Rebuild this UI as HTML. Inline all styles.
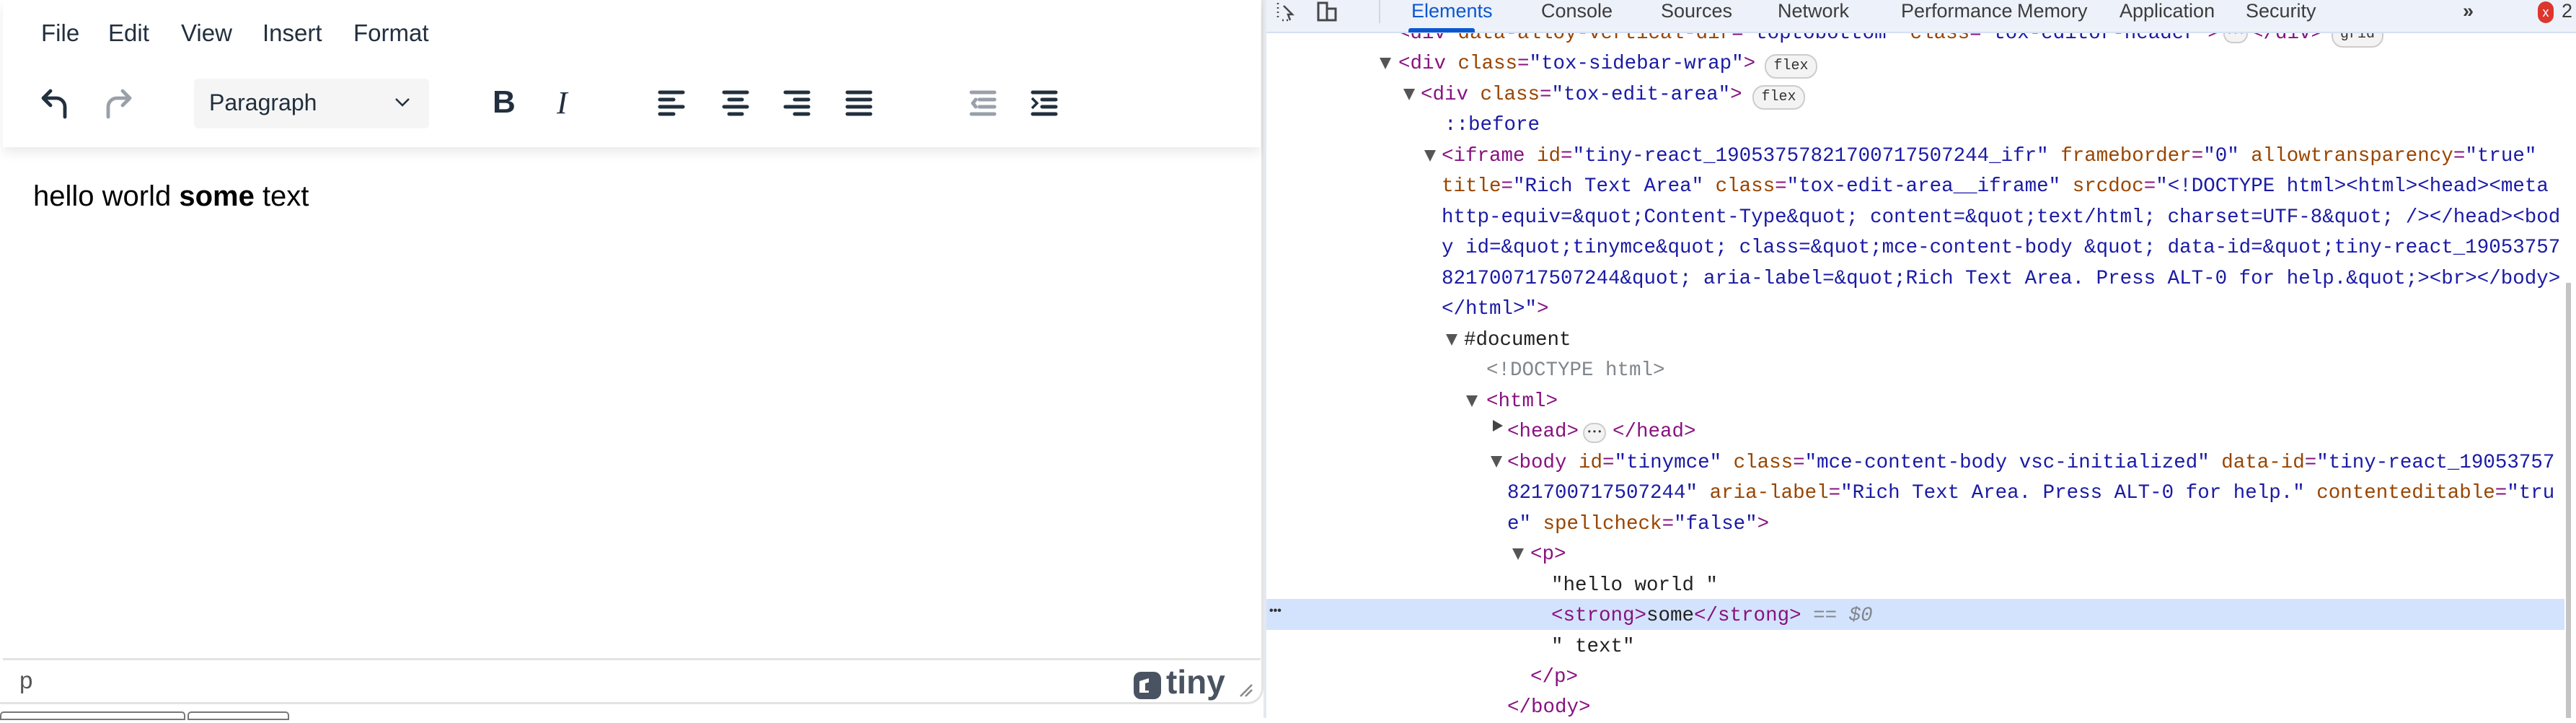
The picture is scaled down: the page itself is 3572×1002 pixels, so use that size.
<!DOCTYPE html>
<html><head><meta charset="utf-8"><style>
*{margin:0;padding:0;box-sizing:border-box}
body{width:3572px;height:995px;overflow:hidden;background:#fff;position:relative;font-family:"Liberation Sans",sans-serif}
.a{position:absolute;white-space:pre}
.m{font-family:"Liberation Mono",monospace;font-size:27.5px;line-height:42px}
.t{color:#881280}.n{color:#994500}.v{color:#1a1aa6}.k{color:#222}.g{color:#80868b}
.tri{position:absolute;width:0;height:0;border-left:8px solid transparent;border-right:8px solid transparent;border-top:16px solid #555}
.trr{position:absolute;width:0;height:0;border-top:8px solid transparent;border-bottom:8px solid transparent;border-left:14px solid #444}
.badge{position:absolute;border:2px solid #ccc;background:#f3f3f3;border-radius:16px;font-family:"Liberation Mono",monospace;font-size:20px;color:#333;text-align:center}
.menu{font-size:33px;color:#222f3e;top:27px}
.tab{position:absolute;top:0;font-size:27px;color:#3c3c3c;line-height:30px}
</style></head><body>

<!-- editor pane -->
<div class="a" style="left:0;top:0;width:1752px;height:976px;border-right:3px solid #e3e3e3;border-bottom:3px solid #e3e3e3;border-radius:0 0 22px 0"></div>
<div class="a" style="left:4px;top:0;width:1744px;height:204px;background:#fff;box-shadow:0 8px 14px rgba(0,0,0,0.08)"></div>
<div class="a menu" style="left:57px">File</div>
<div class="a menu" style="left:150px">Edit</div>
<div class="a menu" style="left:251px">View</div>
<div class="a menu" style="left:364px">Insert</div>
<div class="a menu" style="left:490px">Format</div>

<svg class="a" style="left:50px;top:118px" width="48" height="50" viewBox="0 0 24 25"><path d="M5 9 L10 4 M5 9 L10 14 M5 9 H14 a6 6 0 0 1 6 6 v7" fill="none" stroke="#222f3e" stroke-width="2.4" stroke-linecap="round" stroke-linejoin="round"/></svg>
<svg class="a" style="left:142px;top:118px" width="48" height="50" viewBox="0 0 24 25"><path d="M19 9 L14 4 M19 9 L14 14 M19 9 H10 a6 6 0 0 0 -6 6 v7" fill="none" stroke="#9aa0a8" stroke-width="2.4" stroke-linecap="round" stroke-linejoin="round"/></svg>

<div class="a" style="left:269px;top:109px;width:326px;height:69px;background:#f5f5f5;border-radius:6px"></div>
<div class="a" style="left:290px;top:124px;font-size:32px;color:#222f3e">Paragraph</div>
<svg class="a" style="left:546px;top:132px" width="24" height="20" viewBox="0 0 24 20"><path d="M3 5 L12 14 L21 5" fill="none" stroke="#222f3e" stroke-width="2.5"/></svg>

<div class="a" style="left:683px;top:117px;font-size:44px;font-weight:bold;color:#222f3e">B</div>
<div class="a" style="left:772px;top:117px;font-size:44px;font-style:italic;font-family:'Liberation Serif',serif;color:#222f3e">I</div>

<svg class="a" style="left:912px;top:124px;overflow:visible" width="600" height="40">
<g stroke="#222f3e" stroke-width="5" stroke-linecap="round">
<path d="M3 4H35M3 14H22M3 24H35M3 34H22"/>
<path d="M92 4H124M99 14H117M92 24H124M99 34H117"/>
<path d="M177 4H209M190 14H209M177 24H209M190 34H209"/>
<path d="M263 4H295M263 14H295M263 24H295M263 34H295"/>
<path d="M520 4H552M533 14H552M533 24H552M520 34H552" />
</g>
<g stroke="#9aa0a8" stroke-width="5" stroke-linecap="round"><path d="M435 4H467M446 14H467M446 24H467M435 34H467M437 19L441 14M437 19L441 24" fill="none"/></g>
<path d="M519 12L526 19L519 26" stroke="#222f3e" stroke-width="3.5" fill="none"/>
</svg>

<div class="a" style="left:46px;top:250px;font-size:40px;color:#000">hello world <b>some</b> text</div>

<div class="a" style="left:4px;top:912px;width:1744px;height:3px;background:#e3e3e3"></div>
<div class="a" style="left:27px;top:924px;font-size:33px;color:#555">p</div>
<svg class="a" style="left:1571px;top:930px" width="40" height="40" viewBox="0 0 40 40"><rect x="1" y="1" width="38" height="38" rx="10" fill="#4a5361"/><path d="M9 14 L22 10 V30 L9 30 Z" fill="#fff"/><path d="M17 17 L31 13 V27 L17 27 Z" fill="#4a5361"/><path d="M22 17 L31 14 V27 L22 27 Z" fill="#fff" opacity="0"/></svg>
<div class="a" style="left:1617px;top:918px;font-size:46px;font-weight:bold;color:#4a5361">tiny</div>
<svg class="a" style="left:1716px;top:945px" width="22" height="22"><path d="M4 20L20 4M11 20L20 11" stroke="#888" stroke-width="2.5"/></svg>
<div class="a" style="left:0;top:986px;width:257px;height:12px;border:2px solid #777;border-radius:5px 5px 0 0"></div>
<div class="a" style="left:260px;top:986px;width:141px;height:12px;border:2px solid #777;border-radius:5px 5px 0 0"></div>

<!-- devtools -->
<div class="a" style="left:1752px;top:0;width:4px;height:995px;background:#e5e8ee"></div>

<div class="a m" style="left:1939px;top:26px"><span class="t">&lt;div </span><span class="n">data-alloy-vertical-dir</span><span class="t">=</span><span class="v">"toptobottom"</span> <span class="n">class</span><span class="t">=</span><span class="v">"tox-editor-header"</span><span class="t">&gt;</span></div>
<div class="badge" style="left:3083px;top:34px;width:34px;height:26px;font-size:14px;line-height:20px">•••</div>
<div class="a m t" style="left:3122px;top:26px">&lt;/div&gt;</div>
<div class="badge" style="left:3233px;top:30px;width:72px;height:36px;line-height:32px">grid</div>

<div class="tri" style="left:1913px;top:80px"></div>
<div class="a m" style="left:1939px;top:68px"><span class="t">&lt;div </span><span class="n">class</span><span class="t">=</span><span class="v">"tox-sidebar-wrap"</span><span class="t">&gt;</span></div>
<div class="badge" style="left:2447px;top:75px;width:73px;height:34px;line-height:30px">flex</div>

<div class="tri" style="left:1946px;top:123px"></div>
<div class="a m" style="left:1970px;top:111px"><span class="t">&lt;div </span><span class="n">class</span><span class="t">=</span><span class="v">"tox-edit-area"</span><span class="t">&gt;</span></div>
<div class="badge" style="left:2430px;top:118px;width:73px;height:34px;line-height:30px">flex</div>

<div class="a m v" style="left:2003px;top:153px">::before</div>

<div class="tri" style="left:1975px;top:208px"></div>
<div class="a m" style="left:1999px;top:196px"><span class="t">&lt;iframe </span><span class="n">id</span><span class="t">=</span><span class="v">"tiny-react_19053757821700717507244_ifr"</span> <span class="n">frameborder</span><span class="t">=</span><span class="v">"0"</span> <span class="n">allowtransparency</span><span class="t">=</span><span class="v">"true"</span></div>
<div class="a m" style="left:1999px;top:238px"><span class="n">title</span><span class="t">=</span><span class="v">"Rich Text Area"</span> <span class="n">class</span><span class="t">=</span><span class="v">"tox-edit-area__iframe"</span> <span class="n">srcdoc</span><span class="t">=</span><span class="v">"&lt;!DOCTYPE html&gt;&lt;html&gt;&lt;head&gt;&lt;meta</span></div>
<div class="a m v" style="left:1999px;top:281px">http-equiv=&amp;quot;Content-Type&amp;quot; content=&amp;quot;text/html; charset=UTF-8&amp;quot; /&gt;&lt;/head&gt;&lt;bod</div>
<div class="a m v" style="left:1999px;top:323px">y id=&amp;quot;tinymce&amp;quot; class=&amp;quot;mce-content-body &amp;quot; data-id=&amp;quot;tiny-react_19053757</div>
<div class="a m v" style="left:1999px;top:366px">821700717507244&amp;quot; aria-label=&amp;quot;Rich Text Area. Press ALT-0 for help.&amp;quot;&gt;&lt;br&gt;&lt;/body&gt;</div>
<div class="a m" style="left:1999px;top:408px"><span class="v">&lt;/html&gt;"</span><span class="t">&gt;</span></div>

<div class="tri" style="left:2005px;top:463px"></div>
<div class="a m k" style="left:2030px;top:451px">#document</div>
<div class="a m g" style="left:2061px;top:493px">&lt;!DOCTYPE html&gt;</div>
<div class="tri" style="left:2033px;top:548px"></div>
<div class="a m t" style="left:2061px;top:536px">&lt;html&gt;</div>
<div class="trr" style="left:2070px;top:582px"></div>
<div class="a m t" style="left:2090px;top:578px">&lt;head&gt;</div>
<div class="badge" style="left:2195px;top:586px;width:32px;height:28px;font-size:12px;line-height:22px">•••</div>
<div class="a m t" style="left:2236px;top:578px">&lt;/head&gt;</div>
<div class="tri" style="left:2067px;top:632px"></div>
<div class="a m" style="left:2090px;top:621px"><span class="t">&lt;body </span><span class="n">id</span><span class="t">=</span><span class="v">"tinymce"</span> <span class="n">class</span><span class="t">=</span><span class="v">"mce-content-body vsc-initialized"</span> <span class="n">data-id</span><span class="t">=</span><span class="v">"tiny-react_19053757</span></div>
<div class="a m" style="left:2090px;top:663px"><span class="v">821700717507244"</span> <span class="n">aria-label</span><span class="t">=</span><span class="v">"Rich Text Area. Press ALT-0 for help."</span> <span class="n">contenteditable</span><span class="t">=</span><span class="v">"tru</span></div>
<div class="a m" style="left:2090px;top:706px"><span class="v">e"</span> <span class="n">spellcheck</span><span class="t">=</span><span class="v">"false"</span><span class="t">&gt;</span></div>
<div class="tri" style="left:2097px;top:760px"></div>
<div class="a m t" style="left:2122px;top:748px">&lt;p&gt;</div>
<div class="a m k" style="left:2151px;top:791px">"hello world "</div>
<div class="a" style="left:1756px;top:830px;width:1800px;height:43px;background:#d3e3fd"></div>
<div class="a" style="left:1760px;top:838px;font-size:16px;color:#333;font-weight:bold">•••</div>
<div class="a m" style="left:2151px;top:833px"><span class="t">&lt;strong&gt;</span><span class="k">some</span><span class="t">&lt;/strong&gt;</span> <span class="g">== <i>$0</i></span></div>
<div class="a m k" style="left:2151px;top:876px">" text"</div>
<div class="a m t" style="left:2122px;top:918px">&lt;/p&gt;</div>
<div class="a m t" style="left:2090px;top:960px">&lt;/body&gt;</div>

<div class="a" style="left:3558px;top:392px;width:7px;height:603px;background:#c4c4c4"></div>

<!-- tab bar -->
<div class="a" style="left:1756px;top:0;width:1816px;height:46px;background:#edf1f9;border-bottom:2px solid #d6e0f5"></div>
<svg class="a" style="left:1768px;top:2px" width="110" height="32"><path d="M4 2v2M4 8v2M4 14v2M4 20v2M10 26h2M16 26h2M12 6l12 12h-6l3 8" stroke="#474747" stroke-width="2.5" fill="none"/><rect x="60" y="2" width="12" height="24" fill="none" stroke="#474747" stroke-width="3"/><rect x="72" y="10" width="12" height="16" fill="none" stroke="#474747" stroke-width="3"/></svg>
<div class="a" style="left:1912px;top:0;width:2px;height:32px;background:#d0d7e4"></div>
<div class="tab" style="left:1957px;color:#0b57d0">Elements</div>
<div class="a" style="left:1953px;top:39px;width:92px;height:6px;background:#0b57d0;border-radius:3px 3px 0 0"></div>
<div class="tab" style="left:2137px">Console</div>
<div class="tab" style="left:2303px">Sources</div>
<div class="tab" style="left:2465px">Network</div>
<div class="tab" style="left:2636px">Performance</div>
<div class="tab" style="left:2797px">Memory</div>
<div class="tab" style="left:2939px">Application</div>
<div class="tab" style="left:3114px">Security</div>
<div class="tab" style="left:3415px;font-weight:bold">»</div>
<div class="a" style="left:3519px;top:2px;width:22px;height:30px;border-radius:11px;background:#dc362e;color:#fff;font-size:18px;text-align:center;line-height:30px">x</div>
<div class="tab" style="left:3552px">2</div>
</body></html>
